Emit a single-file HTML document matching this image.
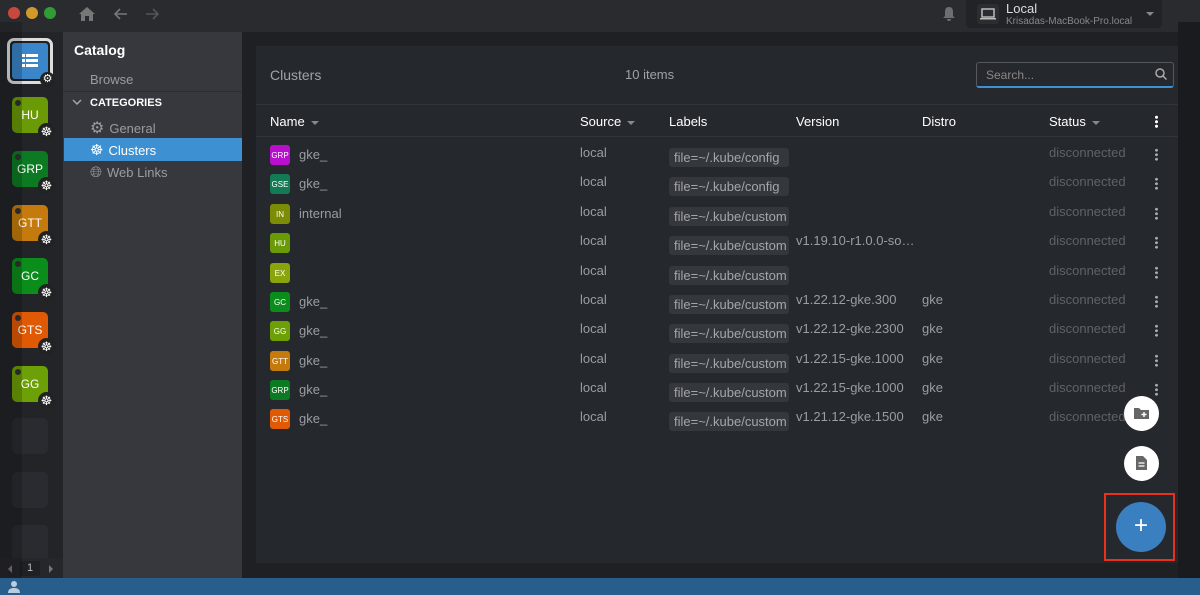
<!DOCTYPE html>
<html><head><meta charset="utf-8"><style>
*{box-sizing:border-box;margin:0;padding:0}
body{width:1200px;height:595px;overflow:hidden;background:#1f2023;font-family:"Liberation Sans",sans-serif;position:relative;color:#ddd}
.abs{position:absolute}
.top{left:0;top:0;width:1200px;height:32px;background:#2a2b2f}
.dot{width:12px;height:12px;border-radius:50%;top:7px}
.hot{left:0;top:32px;width:63px;height:546px;background:#232428}
.hi{left:12px;width:36px;height:36px;border-radius:5px;color:#fff;font-size:12px;display:flex;align-items:center;justify-content:center}
.hi .s{position:absolute;left:3px;top:3px;width:6px;height:6px;border-radius:50%;background:#333}
.hi .k{position:absolute;right:-7px;bottom:-7px;width:17px;height:17px;border-radius:50%;background:#222;color:#fff;font-size:13px;line-height:17px;text-align:center}
.empty{left:12px;width:36px;height:36px;border-radius:5px;background:#2a2b30}
.side{left:63px;top:32px;width:179px;height:546px;background:#37383d}
.main{left:242px;top:32px;width:936px;height:546px;background:#1f2024}
.panel{left:256px;top:46px;width:922px;height:517px;background:#25282d}
.th{top:104px;left:256px;width:922px;height:33px;border-top:1px solid #31353a;border-bottom:1px solid #31353a;font-size:13px;color:#fff}
.th span,.row span{position:absolute}
.row{left:256px;width:922px;height:29px;font-size:13px;color:#9a9da3}
.ic{width:20px;height:20px;border-radius:3px;color:#fff;font-size:8px;display:flex;align-items:center;justify-content:center;top:4px;left:14px}
.lbl{background:#34373c;color:#a3a6ab;border-radius:3px;padding:2px 5px;width:120px;overflow:hidden;white-space:nowrap;top:7px}
.keb{left:899px;top:7px;width:3px;height:13px;background:radial-gradient(circle,#aaa 1.3px,transparent 1.6px) 0 0/3px 4.5px}
.arr{display:inline-block;border-left:4px solid transparent;border-right:4px solid transparent;border-top:4px solid #888;margin-left:6px;vertical-align:middle}
</style></head><body>
<div class="abs top"></div>
<div class="abs dot" style="left:8px;background:#c8483d"></div>
<div class="abs dot" style="left:26px;background:#cf9a2a"></div>
<div class="abs dot" style="left:44px;background:#2f9c34"></div>
<svg class="abs" style="left:78px;top:6px" width="18" height="16" viewBox="0 0 18 16"><path d="M9 1L1 8h2v7h4v-5h4v5h4V8h2z" fill="#777"/></svg>
<svg class="abs" style="left:112px;top:7px" width="16" height="14"><path d="M15 7H3M8 2L3 7l5 5" stroke="#777" stroke-width="1.6" fill="none"/></svg>
<svg class="abs" style="left:145px;top:7px" width="16" height="14"><path d="M1 7h12M8 2l5 5-5 5" stroke="#555" stroke-width="1.6" fill="none"/></svg>
<svg class="abs" style="left:942px;top:6px" width="14" height="16"><path d="M7 1c-3 0-4 2-4 5v4l-2 2h12l-2-2V6c0-3-1-5-4-5zM5 13a2 2 0 004 0z" fill="#6d6e72"/></svg>
<div class="abs" style="left:966px;top:0;width:196px;height:28px;background:#222327;border-radius:0 0 4px 4px"></div>
<div class="abs" style="left:977px;top:4px;width:22px;height:20px;background:#2c2d31;border-radius:3px"></div>
<svg class="abs" style="left:980px;top:8px" width="16" height="12"><rect x="2" y="1" width="12" height="8" fill="none" stroke="#bbb" stroke-width="1.5"/><rect x="0" y="10" width="16" height="1.5" fill="#bbb"/></svg>
<div class="abs" style="left:1006px;top:1px;font-size:13px;color:#ddd">Local</div>
<div class="abs" style="left:1006px;top:16px;font-size:10px;color:#888">Krisadas-MacBook-Pro.local</div>
<div class="abs" style="left:1146px;top:12px;border-left:4px solid transparent;border-right:4px solid transparent;border-top:4px solid #888"></div>

<div class="abs hot"></div>
<div class="abs" style="left:7px;top:38px;width:46px;height:46px;border:3px solid #ddd;border-radius:7px;background:#1f2023"></div>
<div class="abs" style="left:12px;top:43px;width:36px;height:36px;background:#3a86c8;border-radius:3px"></div>
<svg class="abs" style="left:22px;top:54px" width="16" height="14"><g fill="#fff"><rect x="0" y="0" width="3" height="3"/><rect x="4" y="0" width="12" height="3"/><rect x="0" y="5" width="3" height="3"/><rect x="4" y="5" width="12" height="3"/><rect x="0" y="10" width="3" height="3"/><rect x="4" y="10" width="12" height="3"/></g></svg>
<div class="abs" style="left:40px;top:72px;width:15px;height:15px;border-radius:50%;background:#222;color:#fff;font-size:11px;text-align:center;line-height:15px">⚙</div>

<div class="abs hi" style="top:97px;background:#6a9a05"><span class="s"></span>HU<span class="k">☸</span></div>
<div class="abs hi" style="top:151px;background:#0c7a23"><span class="s"></span>GRP<span class="k">☸</span></div>
<div class="abs hi" style="top:205px;background:#c47a0c"><span class="s"></span>GTT<span class="k">☸</span></div>
<div class="abs hi" style="top:258px;background:#0b8d1c"><span class="s"></span>GC<span class="k">☸</span></div>
<div class="abs hi" style="top:312px;background:#e05a05"><span class="s"></span>GTS<span class="k">☸</span></div>
<div class="abs hi" style="top:366px;background:#6d9f06"><span class="s"></span>GG<span class="k">☸</span></div>
<div class="abs empty" style="top:418px"></div>
<div class="abs empty" style="top:472px"></div>
<div class="abs empty" style="top:525px"></div>
<div class="abs" style="left:0;top:558px;width:63px;height:20px;background:#26272b"></div>
<div class="abs" style="left:20px;top:561px;width:20px;height:15px;background:#1f2023;border-radius:2px;color:#bbb;font-size:11px;text-align:center;line-height:15px">1</div>
<div class="abs" style="left:8px;top:565px;border-top:4px solid transparent;border-bottom:4px solid transparent;border-right:4px solid #777"></div>
<div class="abs" style="left:49px;top:565px;border-top:4px solid transparent;border-bottom:4px solid transparent;border-left:4px solid #777"></div>
<div class="abs" style="left:0;top:22px;width:22px;height:556px;background:rgba(0,0,0,.18)"></div>

<div class="abs side"></div>
<div class="abs" style="left:74px;top:42px;font-size:14px;font-weight:bold;color:#fff">Catalog</div>
<div class="abs" style="left:90px;top:72px;font-size:13px;color:#9a9ca0">Browse</div>
<div class="abs" style="left:63px;top:91px;width:179px;height:1px;background:#2d2e32"></div>
<svg class="abs" style="left:72px;top:99px" width="10" height="7"><path d="M1 1l4 4 4-4" stroke="#aaa" stroke-width="1.4" fill="none"/></svg>
<div class="abs" style="left:90px;top:97px;font-size:11px;font-weight:bold;color:#fff">CATEGORIES</div>
<div class="abs" style="left:90px;top:118px;font-size:13px;color:#9a9ca0"><span style="font-size:16px;margin-right:5px">⚙</span>General</div>
<div class="abs" style="left:64px;top:138px;width:178px;height:23px;background:#3d90d2"></div>
<div class="abs" style="left:90px;top:141px;font-size:13px;color:#fff"><span style="font-size:15px;margin-right:5px">☸</span>Clusters</div>
<div class="abs" style="left:90px;top:164px;font-size:13px;color:#9a9ca0"><span style="font-size:15px;margin-right:5px">🌐︎</span>Web Links</div>

<div class="abs main"></div>
<div class="abs panel"></div>
<div class="abs" style="left:270px;top:67px;font-size:14px;color:#a0a3a8">Clusters</div>
<div class="abs" style="left:625px;top:67px;font-size:13px;color:#a0a3a8">10 items</div>
<div class="abs" style="left:976px;top:62px;width:198px;height:26px;border:1px solid #55585d;border-bottom:2px solid #3d90d2;border-radius:3px;background:#25282d"></div>
<div class="abs" style="left:986px;top:68px;font-size:12px;color:#888">Search...</div>
<svg class="abs" style="left:1155px;top:68px" width="12" height="12"><circle cx="5" cy="5" r="4" stroke="#aaa" stroke-width="1.5" fill="none"/><path d="M8 8l3.5 3.5" stroke="#aaa" stroke-width="1.5"/></svg>

<div class="abs th">
<span style="left:14px;top:9px">Name<i class="arr"></i></span>
<span style="left:324px;top:9px">Source<i class="arr"></i></span>
<span style="left:413px;top:9px">Labels</span>
<span style="left:540px;top:9px">Version</span>
<span style="left:666px;top:9px">Distro</span>
<span style="left:793px;top:9px">Status<i class="arr"></i></span>
<span class="keb" style="background:radial-gradient(circle,#fff 1.4px,transparent 1.7px) 0 0/3px 4.5px;top:10px"></span>
</div>

<div class="abs row" style="top:141px"><span class="ic" style="background:#b80fcf">GRP</span><span style="left:43px;top:6px">gke_</span><span style="left:324px;top:4px">local</span><span class="lbl" style="left:413px">file=~/.kube/config</span><span style="left:793px;top:4px;color:#5f6267">disconnected</span><span class="keb"></span></div>
<div class="abs row" style="top:170px"><span class="ic" style="background:#137a56">GSE</span><span style="left:43px;top:6px">gke_</span><span style="left:324px;top:4px">local</span><span class="lbl" style="left:413px">file=~/.kube/config</span><span style="left:793px;top:4px;color:#5f6267">disconnected</span><span class="keb"></span></div>
<div class="abs row" style="top:200px"><span class="ic" style="background:#7d8c05">IN</span><span style="left:43px;top:6px">internal</span><span style="left:324px;top:4px">local</span><span class="lbl" style="left:413px">file=~/.kube/custom</span><span style="left:793px;top:4px;color:#5f6267">disconnected</span><span class="keb"></span></div>
<div class="abs row" style="top:229px"><span class="ic" style="background:#6a9a05">HU</span><span style="left:324px;top:4px">local</span><span class="lbl" style="left:413px">file=~/.kube/custom</span><span style="left:540px;top:4px">v1.19.10-r1.0.0-so…</span><span style="left:793px;top:4px;color:#5f6267">disconnected</span><span class="keb"></span></div>
<div class="abs row" style="top:259px"><span class="ic" style="background:#8aa40c">EX</span><span style="left:324px;top:4px">local</span><span class="lbl" style="left:413px">file=~/.kube/custom</span><span style="left:793px;top:4px;color:#5f6267">disconnected</span><span class="keb"></span></div>
<div class="abs row" style="top:288px"><span class="ic" style="background:#0b8d1c">GC</span><span style="left:43px;top:6px">gke_</span><span style="left:324px;top:4px">local</span><span class="lbl" style="left:413px">file=~/.kube/custom</span><span style="left:540px;top:4px">v1.22.12-gke.300</span><span style="left:666px;top:4px">gke</span><span style="left:793px;top:4px;color:#5f6267">disconnected</span><span class="keb"></span></div>
<div class="abs row" style="top:317px"><span class="ic" style="background:#6d9f06">GG</span><span style="left:43px;top:6px">gke_</span><span style="left:324px;top:4px">local</span><span class="lbl" style="left:413px">file=~/.kube/custom</span><span style="left:540px;top:4px">v1.22.12-gke.2300</span><span style="left:666px;top:4px">gke</span><span style="left:793px;top:4px;color:#5f6267">disconnected</span><span class="keb"></span></div>
<div class="abs row" style="top:347px"><span class="ic" style="background:#c47a0c">GTT</span><span style="left:43px;top:6px">gke_</span><span style="left:324px;top:4px">local</span><span class="lbl" style="left:413px">file=~/.kube/custom</span><span style="left:540px;top:4px">v1.22.15-gke.1000</span><span style="left:666px;top:4px">gke</span><span style="left:793px;top:4px;color:#5f6267">disconnected</span><span class="keb"></span></div>
<div class="abs row" style="top:376px"><span class="ic" style="background:#0c7a23">GRP</span><span style="left:43px;top:6px">gke_</span><span style="left:324px;top:4px">local</span><span class="lbl" style="left:413px">file=~/.kube/custom</span><span style="left:540px;top:4px">v1.22.15-gke.1000</span><span style="left:666px;top:4px">gke</span><span style="left:793px;top:4px;color:#5f6267">disconnected</span><span class="keb"></span></div>
<div class="abs row" style="top:405px"><span class="ic" style="background:#e05a05">GTS</span><span style="left:43px;top:6px">gke_</span><span style="left:324px;top:4px">local</span><span class="lbl" style="left:413px">file=~/.kube/custom</span><span style="left:540px;top:4px">v1.21.12-gke.1500</span><span style="left:666px;top:4px">gke</span><span style="left:793px;top:4px;color:#5f6267">disconnected</span></div>

<div class="abs" style="left:1124px;top:396px;width:35px;height:35px;border-radius:50%;background:#fff"></div>
<svg class="abs" style="left:1133px;top:406px" width="17" height="14"><path d="M1 2h5l2 2h8v9H1z" fill="#666"/><path d="M11 6v5M8.5 8.5h5" stroke="#fff" stroke-width="1.4"/></svg>
<div class="abs" style="left:1124px;top:446px;width:35px;height:35px;border-radius:50%;background:#fff"></div>
<svg class="abs" style="left:1135px;top:455px" width="13" height="16"><path d="M1 1h7l4 4v10H1z" fill="#666"/><path d="M3.5 8h6M3.5 11h6" stroke="#fff" stroke-width="1.3"/></svg>
<div class="abs" style="left:1104px;top:493px;width:71px;height:68px;border:2px solid #e8321c"></div>
<div class="abs" style="left:1116px;top:502px;width:50px;height:50px;border-radius:50%;background:#3a7fbf;color:#fff;font-size:24px;text-align:center;line-height:48px">+</div>

<div class="abs" style="left:1178px;top:22px;width:22px;height:556px;background:#1a1b1e"></div>
<div class="abs" style="left:0;top:578px;width:1200px;height:17px;background:#275e8b"></div>
<svg class="abs" style="left:8px;top:580px" width="12" height="13"><circle cx="6" cy="4" r="3" fill="#bcd"/><path d="M0 13c0-4 3-5 6-5s6 1 6 5z" fill="#bcd"/></svg>
</body></html>
